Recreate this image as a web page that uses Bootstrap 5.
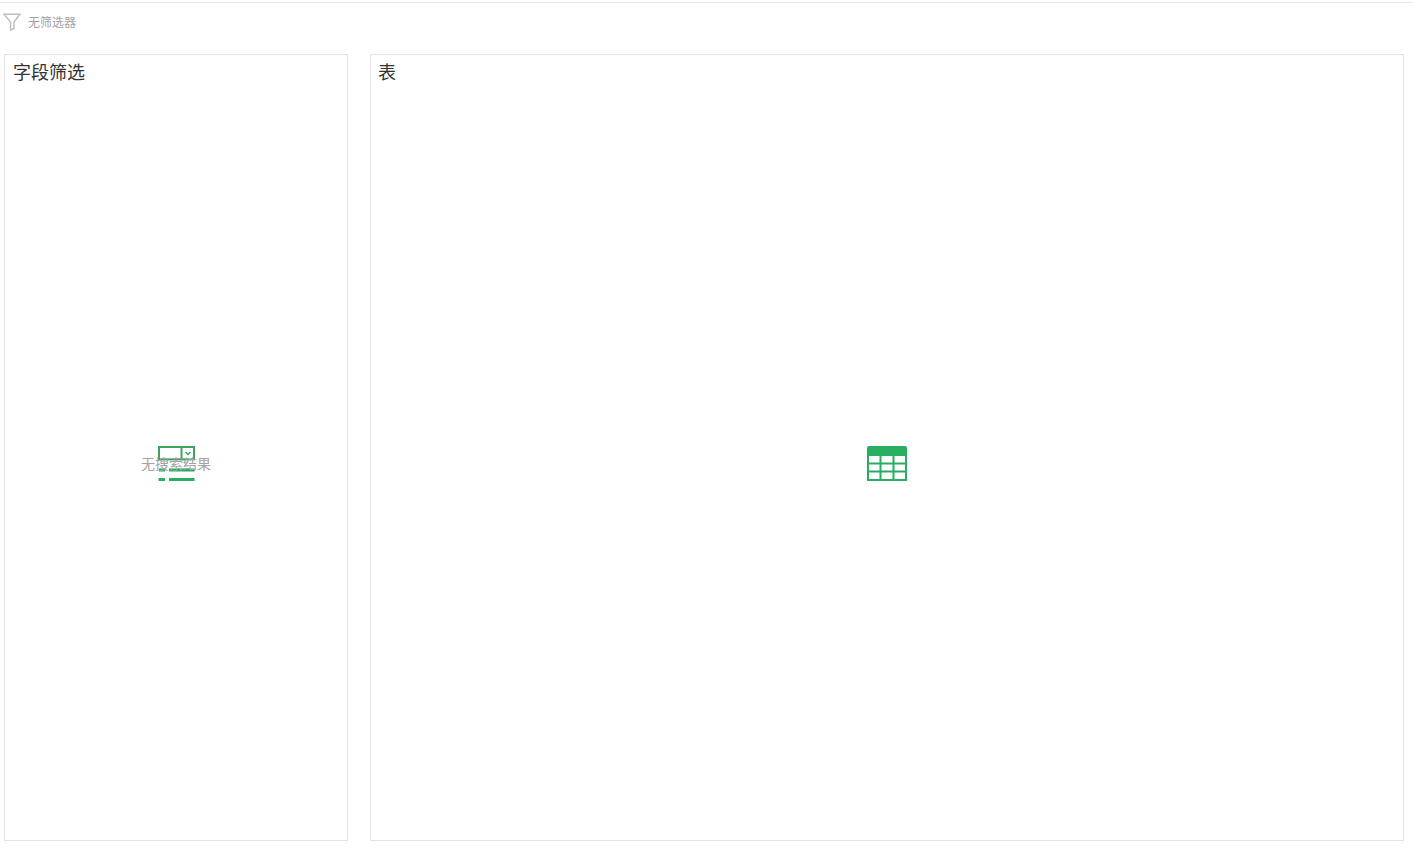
<!DOCTYPE html>
<html lang="zh-CN">
<head>
<meta charset="utf-8">
<title>筛选</title>
<link href="https://cdn.jsdelivr.net/npm/bootstrap@5.3.0/dist/css/bootstrap.min.css" rel="stylesheet">
<style>
html,body{height:100%;overflow:hidden;background:#fff;}
body{font-family:"Liberation Sans","Noto Sans CJK SC",sans-serif;}
.page-shell{height:853px;padding-top:2px;}
.top-rule{height:1px;background:#e6e6f0;}
.filter-strip{height:51px;padding:12px 0 0 3px;gap:7px;color:#a3a3a3;font-size:12px;line-height:17px;}
.filter-strip svg{margin-top:-2px;}
.panels{height:787px;padding-left:4px;padding-right:9px;gap:22px;}
.panel-box{border:1px solid #e3e3e3;background:#fff;min-width:0;}
.panel-left{width:344px;flex:none;}
.panel-title{font-size:18px;line-height:24px;color:#333;padding:6px 8px 0;}
.panel-right .panel-title{padding-left:7px;}
.panel-empty{position:absolute;left:0;right:0;top:391px;display:flex;justify-content:center;}
.empty-text{position:absolute;left:0;right:0;top:399px;text-align:center;font-size:14px;line-height:20px;color:#a3a3a3;}
</style>
</head>
<body>
<div class="page-shell d-flex flex-column">
  <div class="top-rule"></div>
  <div class="filter-strip d-flex align-items-start">
    <svg width="18" height="18" viewBox="0 0 18 18" fill="none" stroke="#bdbdbd" stroke-width="1.4"><path d="M1 1.2H17L11 9V15.500L7.500 17V9Z"/></svg>
    <span>无筛选器</span>
  </div>
  <div class="panels d-flex">
    <div class="panel-box panel-left position-relative">
      <div class="panel-title">字段筛选</div>
      <div class="panel-empty">
        <svg width="37" height="36" viewBox="0 0 37 36" fill="none">
          <rect x="1" y="1" width="35" height="12.400" fill="#fff" stroke="#3fa45a" stroke-width="2"/>
          <path d="M23.500 1V13.400" stroke="#3fa45a" stroke-width="2"/>
          <path d="M27.500 6L30 8.500L32.500 6" stroke="#27ae60" stroke-width="1.500"/>
          <path d="M1 24H7M11 24H36.500M0.500 33.500H7M11 33.500H36.500" stroke="#27ae60" stroke-width="3"/>
        </svg>
      </div>
      <div class="empty-text">无搜索结果</div>
    </div>
    <div class="panel-box panel-right flex-grow-1 position-relative">
      <div class="panel-title">表</div>
      <div class="panel-empty">
        <svg width="40" height="35" viewBox="0 0 40 35" fill="none">
          <path d="M0 2Q0 0 2 0H38Q40 0 40 2V10H0Z" fill="#27ae60"/>
          <path d="M1 9V34H39V9M1 17.500H39M1 25.500H39M13.500 9V34M26.500 9V34" stroke="#27ae60" stroke-width="2"/>
        </svg>
      </div>
    </div>
  </div>
</div>
<script src="https://cdn.jsdelivr.net/npm/bootstrap@5.3.0/dist/js/bootstrap.bundle.min.js"></script>
</body>
</html>
